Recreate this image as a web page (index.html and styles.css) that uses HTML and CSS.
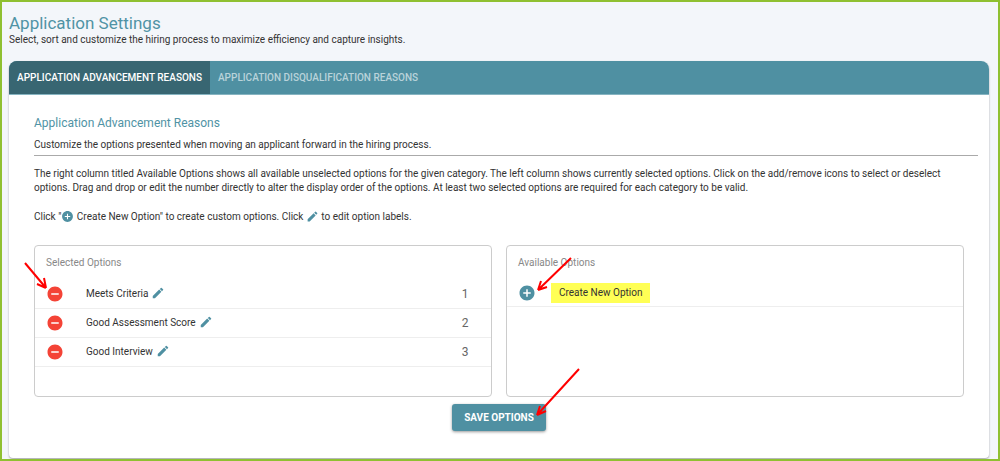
FILE: index.html
```html
<!DOCTYPE html>
<html lang="en">
<head>
    <meta charset="UTF-8">
    <meta name="viewport" content="width=device-width, initial-scale=1.0">
    <title>Application Settings</title>
    <link rel="stylesheet" href="styles.css">
</head>
<body>
    <!-- shared icons -->
    <svg class="sprite" aria-hidden="true">
        <symbol id="icon-remove" viewBox="0 0 24 24"><path d="M12 2C6.48 2 2 6.48 2 12s4.48 10 10 10 10-4.48 10-10S17.52 2 12 2zm5 11H7v-2h10v2z"/></symbol>
        <symbol id="icon-add" viewBox="0 0 24 24"><path d="M12 2C6.48 2 2 6.48 2 12s4.48 10 10 10 10-4.48 10-10S17.52 2 12 2zm5 11h-4v4h-2v-4H7v-2h4V7h2v4h4v2z"/></symbol>
        <symbol id="icon-edit" viewBox="0 0 24 24"><path d="M3 17.25V21h3.75L17.81 9.94l-3.75-3.75L3 17.25zM20.71 7.04a1 1 0 0 0 0-1.41l-2.34-2.34a1 1 0 0 0-1.41 0l-1.83 1.83 3.75 3.75 1.83-1.83z"/></symbol>
    </svg>

    <header class="page-header">
        <h1>Application Settings</h1>
        <p>Select, sort and customize the hiring process to maximize efficiency and capture insights.</p>
    </header>

    <main class="card">
        <nav class="tabs">
            <a href="#advancement" class="tab active">Application Advancement Reasons</a>
            <a href="#disqualification" class="tab">Application Disqualification Reasons</a>
        </nav>

        <section class="content" id="advancement">
            <h2>Application Advancement Reasons</h2>
            <p class="subtitle">Customize the options presented when moving an applicant forward in the hiring process.</p>
            <p class="help">The right column titled Available Options shows all available unselected options for the given category. The left column shows currently selected options. Click on the add/remove icons to select or deselect options. Drag and drop or edit the number directly to alter the display order of the options. At least two selected options are required for each category to be valid.</p>
            <p class="help">Click "<svg class="inline-icon"><use href="#icon-add"/></svg> Create New Option" to create custom options. Click <svg class="inline-icon"><use href="#icon-edit"/></svg> to edit option labels.</p>

            <div class="columns">
                <div class="panel">
                    <h3>Selected Options</h3>
                    <ul>
                        <li>
                            <button class="icon-button remove" aria-label="Remove Meets Criteria">
                                <svg><use href="#icon-remove"/></svg>
                                <svg class="arrow arrow-remove" viewBox="0 0 26 30"><path d="M3 3L24 28M24 28l-9-4M24 28l-2-10"/></svg>
                            </button>
                            <label for="order1">Meets Criteria</label>
                            <button class="edit" aria-label="Edit Meets Criteria"><svg><use href="#icon-edit"/></svg></button>
                            <input type="text" id="order1" value="1">
                        </li>
                        <li>
                            <button class="icon-button remove" aria-label="Remove Good Assessment Score"><svg><use href="#icon-remove"/></svg></button>
                            <label for="order2">Good Assessment Score</label>
                            <button class="edit" aria-label="Edit Good Assessment Score"><svg><use href="#icon-edit"/></svg></button>
                            <input type="text" id="order2" value="2">
                        </li>
                        <li>
                            <button class="icon-button remove" aria-label="Remove Good Interview"><svg><use href="#icon-remove"/></svg></button>
                            <label for="order3">Good Interview</label>
                            <button class="edit" aria-label="Edit Good Interview"><svg><use href="#icon-edit"/></svg></button>
                            <input type="text" id="order3" value="3">
                        </li>
                    </ul>
                </div>
                <div class="panel available">
                    <h3>Available Options</h3>
                    <ul>
                        <li>
                            <button class="icon-button add" aria-label="Add option">
                                <svg><use href="#icon-add"/></svg>
                                <svg class="arrow arrow-add" viewBox="0 0 38 36"><path d="M36 2L3 34M3 34l3-9M3 34l9-3"/></svg>
                            </button>
                            <button class="create">Create New Option</button>
                        </li>
                    </ul>
                </div>
            </div>
        </section>

        <div class="actions">
            <button class="save">Save Options
                <svg class="arrow arrow-save" viewBox="0 0 46 50"><path d="M44 2L2 48M2 48l3-9M2 48l9-4"/></svg>
            </button>
        </div>
    </main>
</body>
</html>
```

FILE: styles.css
```css
* {
    box-sizing: border-box;
}
body {
    display: flex;
    flex-direction: column;
    min-height: 100vh;
    margin: 0;
    padding: 0 9px 1px 7px;
    border: 2px solid #8fc031;
    background-color: #f3f6fa;
    font-family: Roboto, "Liberation Sans", sans-serif;
    font-size: 10px;
    line-height: 14px;
    color: #333;
}
h1, h2, h3, p, ul {
    margin: 0;
    padding: 0;
    font-weight: 400;
}
button {
    border: none;
    padding: 0;
    background: none;
    font: inherit;
    color: inherit;
    cursor: pointer;
}
svg {
    fill: currentColor;
}
.sprite {
    position: absolute;
    width: 0;
    height: 0;
}
.page-header {
    padding: 11px 0 14px;
}
h1 {
    font-size: 17px;
    line-height: 20px;
    color: #5093a5;
}
.card {
    flex: 1;
    border-radius: 8px 8px 4px 4px;
    background-color: #fff;
    box-shadow: 0 1px 2px rgba(0, 0, 0, 0.35);
}
.tabs {
    display: flex;
    height: 34px;
    border-bottom: 1px solid #86b4c1;
    border-radius: 8px 8px 0 0;
    background-color: #4f90a2;
    overflow: hidden;
}
.tab {
    padding: 0 8px;
    font-weight: 500;
    line-height: 34px;
    text-transform: uppercase;
    text-decoration: none;
    color: #b9d3da;
}
.tab.active {
    background-color: #386672;
    color: #fff;
}
.content {
    padding: 20px 11px 0 25px;
}
h2 {
    font-size: 12px;
    line-height: 16px;
    color: #5093a5;
}
.subtitle {
    padding: 7px 0 3px;
    border-bottom: 1px solid #aaa;
}
.help {
    margin-top: 11px;
}
.help + .help {
    margin-top: 15px;
}
.inline-icon {
    width: 13px;
    height: 13px;
    vertical-align: -3px;
    color: #4f90a2;
}
.columns {
    display: grid;
    grid-template-columns: 1fr 1fr;
    gap: 14px;
    margin-top: 21px;
    padding-right: 14px;
}
.panel {
    min-height: 152px;
    border: 1px solid #ccc;
    border-radius: 4px;
}
h3 {
    padding: 0 11px;
    font-size: 10px;
    line-height: 34px;
    color: #888;
}
.panel li {
    display: flex;
    align-items: center;
    height: 29px;
    padding: 0 11px;
    border-bottom: 1px solid #eee;
}
.panel.available li {
    height: 27px;
}
.icon-button {
    position: relative;
    width: 18px;
    height: 18px;
}
.icon-button svg {
    display: block;
    width: 18px;
    height: 18px;
}
.remove {
    margin-right: 22px;
    color: #f44336;
}
.add {
    margin-right: 15px;
    color: #4f90a2;
}
.edit {
    width: 14px;
    margin-left: 3px;
    padding-bottom: 2px;
    color: #4f90a2;
}
.edit svg {
    display: block;
    width: 14px;
    height: 14px;
}
.panel input {
    width: 30px;
    margin-left: auto;
    padding: 0;
    border: none;
    background: none;
    font: inherit;
    font-size: 12px;
    text-align: center;
    color: #666;
}
.create {
    padding: 3px 8px;
    background-color: #ffff55;
}
.actions {
    padding: 7px 0 27px;
    text-align: center;
}
.save {
    position: relative;
    height: 27px;
    padding: 0 12px;
    border-radius: 3px;
    background-color: #4f90a2;
    box-shadow: 0 1px 3px rgba(0, 0, 0, 0.4);
    font-weight: 700;
    text-transform: uppercase;
    color: #fff;
}
/* red pointers over the controls */
.arrow {
    position: absolute;
    fill: none;
    stroke: #f00;
    stroke-width: 2;
    pointer-events: none;
}
.icon-button .arrow-remove {
    right: 16px;
    bottom: 13px;
    width: 26px;
    height: 30px;
}
.icon-button .arrow-add {
    left: 17px;
    bottom: 10px;
    width: 38px;
    height: 36px;
}
.arrow-save {
    right: -35px;
    bottom: 14px;
    width: 46px;
    height: 50px;
}
```
